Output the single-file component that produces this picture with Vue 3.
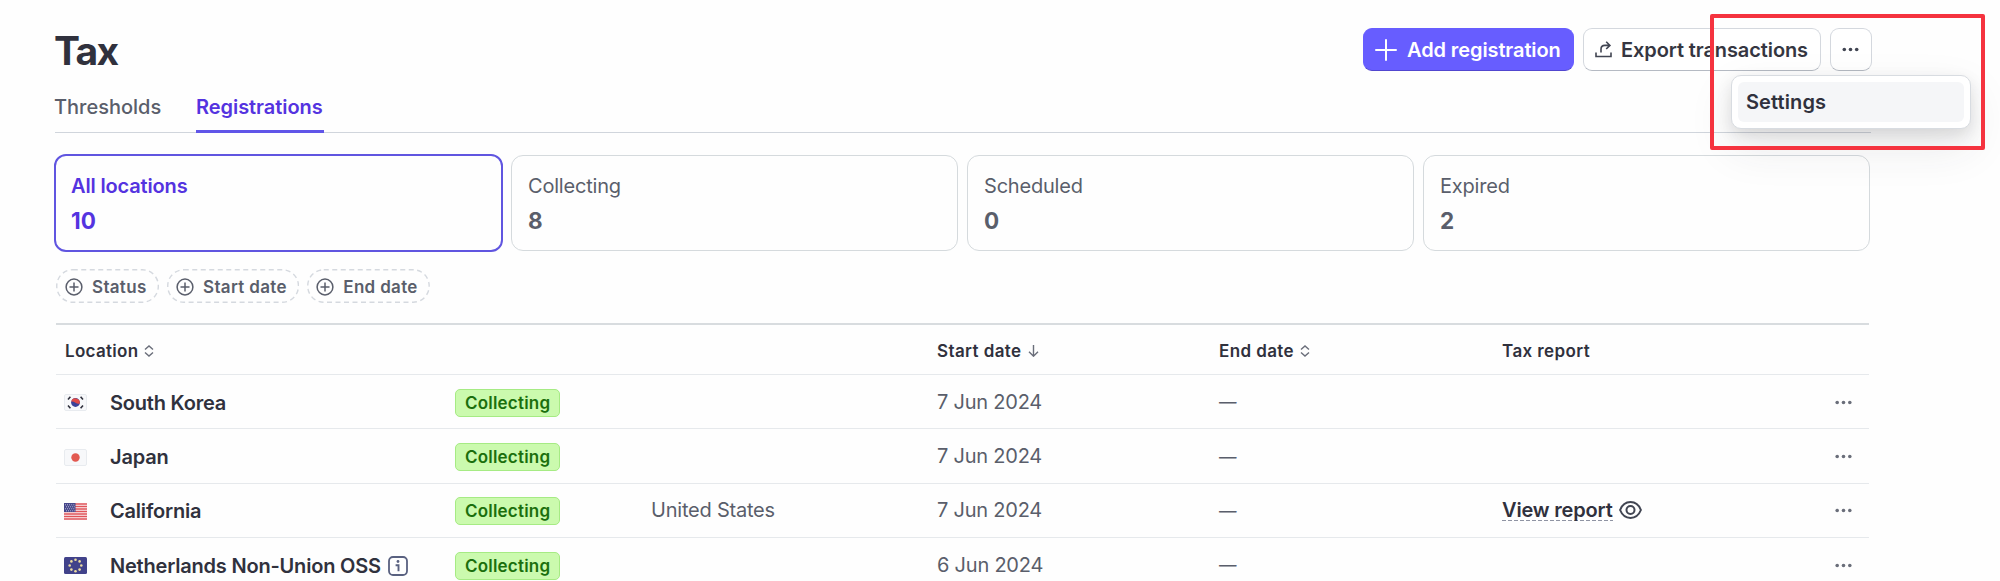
<template>
  <div class="page">
    <header class="header">
      <h1>Tax</h1>
      <div class="actions">
        <button class="btn primary">
          <svg width="22" height="22" viewBox="0 0 22 22"><path d="M11 1v20M1 11h20" stroke="#fff" stroke-width="2" stroke-linecap="round" /></svg>
          <span>Add registration</span>
        </button>
        <button class="btn export">
          <svg width="17" height="17" viewBox="0 0 17 17" fill="none" stroke="#414552" stroke-width="1.6">
            <path d="M1 11.5v4h15v-4M6 11.5V8.2q0-3.8 3.8-3.8h5M11.2 0.8l3.7 3.6-3.7 3.6" />
          </svg>
          <span>Export transactions</span>
        </button>
        <button class="btn more">
          <svg width="17" height="5" viewBox="0 0 17 5" fill="#414552">
            <circle cx="2.3" cy="2.5" r="1.8" /><circle cx="8.5" cy="2.5" r="1.8" /><circle cx="14.7" cy="2.5" r="1.8" />
          </svg>
        </button>
        <div class="menu">
          <div class="menu-item">Settings</div>
        </div>
        <div class="highlight"></div>
      </div>
    </header>

    <nav class="tabs">
      <a
        v-for="tab in tabs"
        :key="tab"
        class="tab"
        :class="{ active: tab === activeTab }"
        @click="activeTab = tab"
      >{{ tab }}</a>
    </nav>

    <section class="cards">
      <div
        v-for="card in cards"
        :key="card.label"
        class="card"
        :class="{ active: card.label === activeCard }"
        @click="activeCard = card.label"
      >
        <div class="card-label">{{ card.label }}</div>
        <div class="card-count">{{ card.count }}</div>
      </div>
    </section>

    <div class="filters">
      <button v-for="filter in filters" :key="filter" class="filter">
        <svg class="dash"><rect x="0.75" y="0.75" rx="16" /></svg>
        <svg width="18" height="18" viewBox="0 0 18 18" fill="none" stroke="#5a5e6b" stroke-width="1.5">
          <circle cx="9" cy="9" r="7.9" /><path d="M9 4.5v9M4.5 9h9" />
        </svg>
        <span>{{ filter }}</span>
      </button>
    </div>

    <div class="table">
      <div class="row head">
        <div class="cell-location">Location
          <svg class="sort" width="10" height="12" viewBox="0 0 10 12"><path d="M1 4.5L5 1l4 3.5M1 7.5L5 11l4-3.5" /></svg>
        </div>
        <div></div>
        <div></div>
        <div>Start date
          <svg class="sort" width="11" height="12" viewBox="0 0 11 12"><path d="M5.5 0v11M1 6.8l4.5 4.4L10 6.8" /></svg>
        </div>
        <div>End date
          <svg class="sort" width="10" height="12" viewBox="0 0 10 12"><path d="M1 4.5L5 1l4 3.5M1 7.5L5 11l4-3.5" /></svg>
        </div>
        <div>Tax report</div>
        <div></div>
      </div>

      <div v-for="row in rows" :key="row.name" class="row">
        <div class="cell-location">
          <svg class="flag" width="23" height="17" viewBox="0 0 23 17">
            <template v-if="row.flag === 'kr'">
              <rect x="0.5" y="0.5" width="22" height="16" rx="1.5" fill="#f7f8fa" stroke="#e8ebef" />
              <path d="M4 5.5l2.4-2.7M16.6 14.2l2.4-2.7M4 11.5l2.4 2.7M16.6 2.8L19 5.5" stroke="#30313d" stroke-width="1.6" />
              <circle cx="11.5" cy="8.5" r="4.4" fill="#3b4299" />
              <path d="M7.2 7.6a4.4 4.4 0 0 1 8.6 1.8q-2 0.8-4.3-0.7t-4.3-1.1" fill="#e04b46" />
            </template>
            <template v-else-if="row.flag === 'jp'">
              <rect x="0.5" y="0.5" width="22" height="16" rx="1.5" fill="#f7f8fa" stroke="#e8ebef" />
              <circle cx="11.5" cy="8.5" r="4.2" fill="#e25950" />
            </template>
            <template v-else-if="row.flag === 'us'">
              <rect width="23" height="17" rx="1.5" fill="#fbf3f4" />
              <path d="M0 1h23M0 3.5h23M0 6h23M0 8.5h23M0 11h23M0 13.5h23M0 16h23" stroke="#e0545a" stroke-width="1.4" />
              <rect width="11.5" height="9" fill="#46478b" />
              <path d="M1 1.8h10M2 3.8h9M1 5.8h10M2 7.8h9" stroke="#d7d8ea" stroke-width="0.9" stroke-dasharray="0.9 1.2" />
            </template>
            <template v-else>
              <rect width="23" height="17" rx="1.5" fill="#41428a" />
              <circle v-for="(star, i) in stars" :key="i" :cx="star.x" :cy="star.y" r="1.3" fill="#ecdca0" />
            </template>
          </svg>
          <span class="name">{{ row.name }}</span>
          <svg v-if="row.info" class="info" width="20" height="20" viewBox="0 0 20 20" fill="none" stroke="#596180">
            <rect x="1" y="1" width="18" height="18" rx="4" stroke-width="1.8" />
            <path d="M7.6 9.2h2.9v6" stroke-width="1.9" /><circle cx="10" cy="5.5" r="1.4" fill="#596180" stroke="none" />
          </svg>
        </div>
        <div><span class="badge">Collecting</span></div>
        <div class="muted">{{ row.country }}</div>
        <div class="muted">{{ row.start }}</div>
        <div class="muted none">—</div>
        <div class="report">
          <template v-if="row.report">
            <a>View report</a>
            <svg width="23" height="18" viewBox="0 0 23 18" fill="none" stroke="#414552" stroke-width="2">
              <path d="M1.1 9C3 4.2 6.8 1.1 11.5 1.1S20 4.2 21.9 9C20 13.8 16.2 16.9 11.5 16.9S3 13.8 1.1 9Z" />
              <circle cx="11.5" cy="9" r="4" />
            </svg>
          </template>
        </div>
        <div class="row-more">
          <svg width="17" height="5" viewBox="0 0 17 5" fill="#6a6e7a">
            <circle cx="2.2" cy="2.5" r="1.8" /><circle cx="8.5" cy="2.5" r="1.8" /><circle cx="14.8" cy="2.5" r="1.8" />
          </svg>
        </div>
      </div>
    </div>
  </div>
</template>

<script setup>
import { ref } from 'vue';

const tabs = ['Thresholds', 'Registrations'];
const activeTab = ref('Registrations');

const cards = [
  { label: 'All locations', count: 10 },
  { label: 'Collecting', count: 8 },
  { label: 'Scheduled', count: 0 },
  { label: 'Expired', count: 2 },
];
const activeCard = ref('All locations');

const filters = ['Status', 'Start date', 'End date'];

const rows = [
  { flag: 'kr', name: 'South Korea', start: '7 Jun 2024' },
  { flag: 'jp', name: 'Japan', start: '7 Jun 2024' },
  { flag: 'us', name: 'California', country: 'United States', start: '7 Jun 2024', report: true },
  { flag: 'eu', name: 'Netherlands Non-Union OSS', start: '6 Jun 2024', info: true },
];

// ring of stars on the EU flag
const stars = Array.from({ length: 8 }, (_, i) => ({
  x: 11.5 + 5.8 * Math.cos((i * Math.PI) / 4),
  y: 8.5 + 5.8 * Math.sin((i * Math.PI) / 4),
}));
</script>

<style>
body { background: #fefefe; overflow: hidden; }
</style>

<style scoped>
.page {
  box-sizing: border-box;
  width: 2000px;
  height: 581px;
  padding: 28px 129px 0 55px;
  overflow: hidden;
  font-family: Inter, "Liberation Sans", sans-serif;
  font-size: 20px;
  color: #30313d;
}
svg { display: block; flex: none; }
button { font: inherit; margin: 0; cursor: pointer; }

.header { display: flex; justify-content: space-between; height: 44px; margin-right: -1px; }
h1 { margin: 1px 0 0 -1px; font-size: 39px; line-height: 44px; font-weight: 700; letter-spacing: -1.7px; }
.actions { position: relative; display: flex; gap: 9px; height: 43px; }
.btn {
  display: flex;
  align-items: center;
  box-sizing: border-box;
  height: 43px;
  padding: 0 11px;
  border: 1px solid #d4d8de;
  border-bottom-color: #b5bac3;
  border-radius: 9px;
  background: #fff;
  color: #353641;
  font-weight: 600;
  letter-spacing: -0.1px;
  white-space: nowrap;
}
.primary { width: 211px; gap: 10px; background: #675dff; border-color: #675dff; border-bottom-color: #5146cf; color: #fff; }
.export { width: 238px; gap: 9px; }
.more { width: 42px; justify-content: center; padding: 0 1px 0 0; }
.menu {
  position: absolute;
  z-index: 2;
  top: 47px;
  left: 368px;
  box-sizing: border-box;
  width: 240px;
  height: 54px;
  padding: 6px;
  border: 1px solid #d8dce1;
  border-radius: 10px;
  background: #fff;
  box-shadow: 0 18px 45px rgba(48, 49, 61, 0.1), 0 6px 16px rgba(0, 0, 0, 0.11);
}
.menu-item {
  height: 40px;
  padding-left: 8px;
  border-radius: 6px;
  background: #f5f6f8;
  font-weight: 600;
  letter-spacing: 0.1px;
  line-height: 40px;
}
.highlight {
  position: absolute;
  z-index: 3;
  top: -14px;
  left: 347px;
  box-sizing: border-box;
  width: 275px;
  height: 136px;
  border: 4px solid #f5333f;
  border-radius: 2px;
}

.tabs { display: flex; gap: 34px; height: 60px; border-bottom: 1px solid #d0d5dc; }
.tab { box-sizing: border-box; width: 107px; height: 61px; padding-top: 22px; line-height: 26px; font-weight: 500; color: #5a5e6b; text-indent: -1px; cursor: pointer; }
.tab.active { width: 128px; color: #5433e0; border-bottom: 3px solid #6055e8; text-indent: 0; font-weight: 600; letter-spacing: -0.05px; }

.cards { display: grid; grid-template-columns: repeat(4, 447px); gap: 9px; margin-top: 22px; }
.card { box-sizing: border-box; height: 96px; padding: 16px 16px 0; border: 1px solid #d5dadd; border-radius: 12px; color: #5a5e6b; cursor: pointer; }
.card.active { margin: -1px; height: 98px; padding-left: 15px; border: 2px solid #6055e0; color: #5433e0; }
.card-label { line-height: 28px; letter-spacing: -0.2px; }
.card.active .card-label { font-weight: 600; letter-spacing: -0.15px; }
.card-count { margin-top: 7px; font-size: 22.5px; line-height: 28px; font-weight: 700; }

.filters { display: flex; gap: 8px; margin: 18px 0 0 1px; }
.filter {
  position: relative;
  display: flex;
  align-items: center;
  gap: 9px;
  height: 34px;
  padding: 1px 12.5px 0 9px;
  border: 0;
  background: none;
  color: #5a5e6b;
  font-size: 17px;
  font-weight: 600;
  letter-spacing: 0.32px;
}
.dash { position: absolute; inset: 0; width: 100%; height: 100%; }
.dash rect { width: calc(100% - 1.5px); height: calc(100% - 1.5px); fill: none; stroke: #d5d9df; stroke-width: 1.4; stroke-dasharray: 5 3.5; }

.table { width: 1813px; margin: 20px 0 0 1px; border-top: 2px solid #d8dcdf; }
.row {
  display: grid;
  grid-template-columns: 399px 196px 286px 282px 283px 333px 1fr;
  align-items: center;
  box-sizing: border-box;
  height: 54.4px;
  border-bottom: 1px solid #e6e9ec;
}
.row > div { display: flex; align-items: center; white-space: nowrap; }
.row.head { height: 50px; padding-top: 2px; font-size: 17px; font-weight: 600; letter-spacing: 0.4px; }
.head .cell-location { padding-left: 9px; letter-spacing: 0.3px; }
.row:not(.head) .cell-location { padding-top: 2px; }
.row-more { padding-top: 1px; }
.sort { margin-left: 6px; fill: none; stroke: #6a6e7a; stroke-width: 1.4; }
.flag { margin: 0 23px 0 8px; }
.name { font-weight: 600; letter-spacing: -0.2px; }
.info { margin-left: 7px; }
.badge {
  box-sizing: border-box;
  height: 28px;
  margin-top: 2px;
  padding: 0 9px;
  border: 1px solid #a6eb84;
  border-radius: 5px;
  background: #cbfaae;
  color: #1b6f0d;
  font-size: 17px;
  font-weight: 600;
  letter-spacing: 0.2px;
  line-height: 27px;
}
.muted { color: #5a5e6b; letter-spacing: -0.22px; }
.none { font-size: 17.5px; }
.report { gap: 6px; font-weight: 600; letter-spacing: -0.17px; }
.report a {
  line-height: 22px;
  background: repeating-linear-gradient(90deg, #8f94a3 0 4px, transparent 4px 6px) 0 100% / 100% 1.5px no-repeat;
}
</style>
